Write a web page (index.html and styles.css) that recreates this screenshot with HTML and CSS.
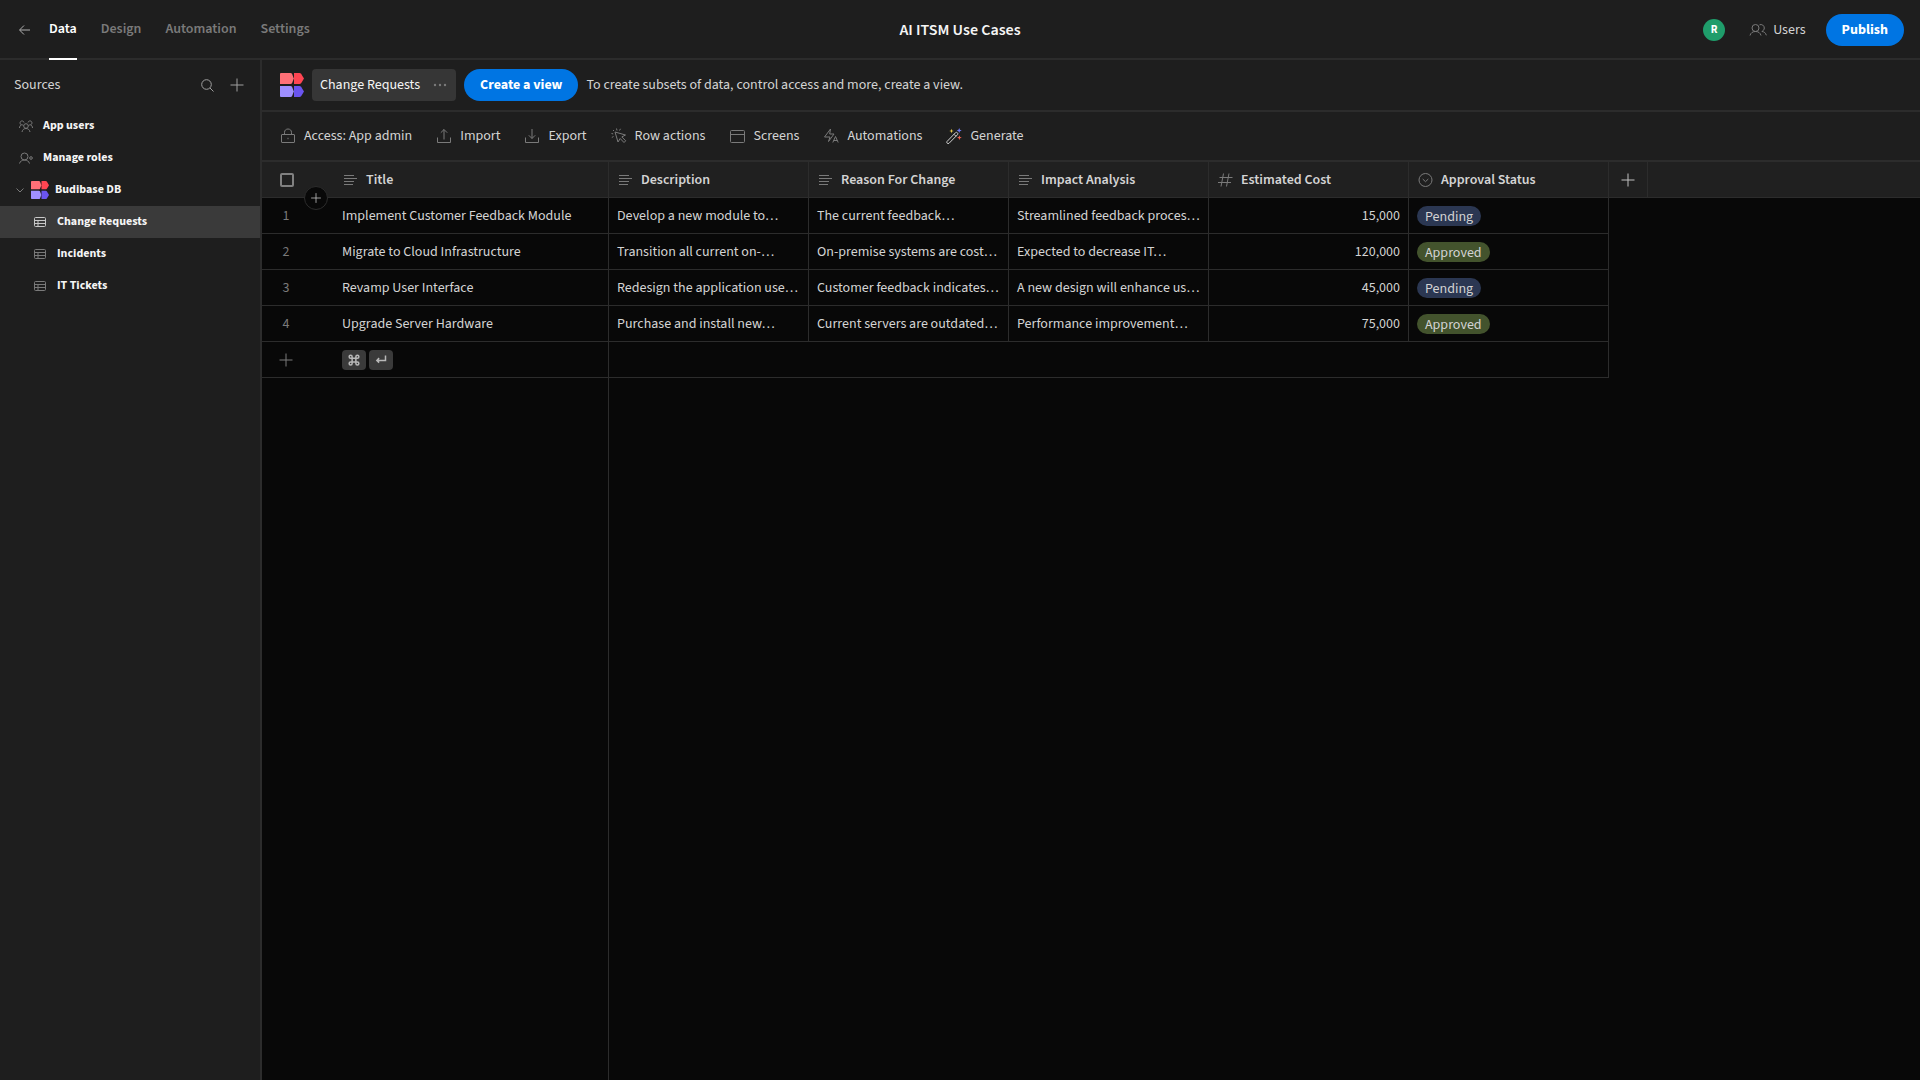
FILE: index.html
```
<!DOCTYPE html>
<html lang="en">
<head>
    <meta charset="UTF-8">
    <meta name="viewport" content="width=device-width, initial-scale=1.0">
    <title>AI ITSM Use Cases</title>
    <link rel="stylesheet" href="styles.css">
</head>
<body>
    <!-- shared icons -->
    <svg class="sprite" aria-hidden="true">
        <symbol id="logo" viewBox="0 0 24 24">
            <path fill="#ff7077" d="M0 1q0-1 1-1h9.500q1 0 1.500.800L13.800 5.500 12 10.200q-.5.800-1.500.8H0z"/>
            <path fill="#ff4552" d="M14 0h5.500q1 0 1.600.800L24 5.500 21.100 10.200q-.6.800-1.600.8H14z"/>
            <path fill="#9f8fff" d="M0 13h10.500q1 0 1.500.800L13.800 18.500 12 23.200q-.5.800-1.500.8H1q-1 0-1-1z"/>
            <path fill="#6a54f0" d="M14 13h5.500q1 0 1.600.800L24 18.500 21.100 23.200q-.6.800-1.600.8H14z"/>
        </symbol>
        <symbol id="plus" viewBox="0 0 16 16">
            <path d="M8 1.500v13M1.500 8h13"/>
        </symbol>
        <symbol id="text-lines" viewBox="0 0 16 16">
            <path d="M2 3.500h10M2 6.500h13M2 9.500h10M2 12.500h9"/>
        </symbol>
        <symbol id="table-icon" viewBox="0 0 16 16">
            <rect x="2.500" y="3.500" width="11" height="9" rx="1"/>
            <path d="M2.500 6.500h11M2.500 9.500h11M6 6.500v6"/>
        </symbol>
    </svg>

    <header class="topbar">
        <nav class="tabs">
            <a class="back" href="#" aria-label="Back">
                <svg class="icon" viewBox="0 0 16 16"><path d="M14 8H4M8 3.500 3.500 8 8 12.500"/></svg>
            </a>
            <a class="tab active" href="#">Data</a>
            <a class="tab" href="#">Design</a>
            <a class="tab" href="#">Automation</a>
            <a class="tab" href="#">Settings</a>
        </nav>
        <h1>AI ITSM Use Cases</h1>
        <div class="top-actions">
            <span class="avatar">R</span>
            <button class="users" type="button">
                <svg class="icon-wide" viewBox="0 0 18 16"><circle cx="6.500" cy="6" r="3.500"/><path d="M1 13.500c.6-2.600 2.700-4 5.500-4s4.900 1.400 5.500 4M10.500 2.800c2.200-.9 4.800.6 4.800 3.200 0 1.600-1 3-2.600 3.400M13 9.500c2.200.2 3.800 1.500 4.300 3.800"/></svg>
                Users
            </button>
            <button class="cta" type="button">Publish</button>
        </div>
    </header>

    <div class="layout">
        <aside class="sidebar">
            <div class="sources">
                <h2>Sources</h2>
                <button type="button" aria-label="Search"><svg class="icon" viewBox="0 0 16 16"><circle cx="7.500" cy="7.500" r="4.800"/><path d="m11 11 3.500 3.500"/></svg></button>
                <button type="button" aria-label="Add source"><svg class="icon"><use href="#plus"/></svg></button>
            </div>
            <a class="source" href="#">
                <svg class="icon" viewBox="0 0 16 16"><circle cx="8" cy="8" r="2.300"/><path d="M4 14c.4-2.200 1.900-3.500 4-3.500s3.600 1.300 4 3.500M6 4.500A2 2 0 1 0 3.400 6.800M1.500 10c.1-1.600.8-2.700 1.900-3.200 1.100 0 1.700.3 2.100.8M10 4.500a2 2 0 1 1 2.600 2.300M14.500 10c-.1-1.600-.8-2.700-1.900-3.200-1.100 0-1.700.3-2.100.8"/></svg>
                App users
            </a>
            <a class="source" href="#">
                <svg class="icon" viewBox="0 0 16 16"><circle cx="6.500" cy="6.500" r="3.500"/><path d="M1.500 13.500c.7-2.300 2.500-3.500 5-3.500s4.300 1.200 5 3.500"/><circle cx="13" cy="8" r="1.300"/></svg>
                Manage roles
            </a>
            <a class="source db" href="#">
                <svg class="chevron" viewBox="0 0 10 10"><path d="M1.500 3.500 5 7l3.500-3.500"/></svg>
                <svg class="db-logo"><use href="#logo"/></svg>
                Budibase DB
            </a>
            <a class="source child selected" href="#"><svg class="icon"><use href="#table-icon"/></svg>Change Requests</a>
            <a class="source child" href="#"><svg class="icon"><use href="#table-icon"/></svg>Incidents</a>
            <a class="source child" href="#"><svg class="icon"><use href="#table-icon"/></svg>IT Tickets</a>
        </aside>

        <main class="content">
            <div class="viewbar">
                <svg class="logo"><use href="#logo"/></svg>
                <button class="view-tab" type="button">
                    Change Requests
                    <svg class="icon dots" viewBox="0 0 16 16"><circle cx="3" cy="8" r="1.200"/><circle cx="8" cy="8" r="1.200"/><circle cx="13" cy="8" r="1.200"/></svg>
                </button>
                <button class="cta" type="button">Create a view</button>
                <p>To create subsets of data, control access and more, create a view.</p>
            </div>

            <div class="toolbar">
                <button type="button"><svg class="icon" viewBox="0 0 16 16"><rect x="1.500" y="6.500" width="13" height="8" rx=".5"/><path d="M4.500 6.500V4.300c0-2 1.500-3.300 3.500-3.300s3.500 1.300 3.500 3.300v2.200M8 9.800v1.400"/></svg>Access: App admin</button>
                <button type="button"><svg class="icon" viewBox="0 0 16 16"><path d="M1.500 9.500v5h13v-5M8 11.500v-10M4.800 4.700 8 1.500l3.200 3.200"/></svg>Import</button>
                <button type="button"><svg class="icon" viewBox="0 0 16 16"><path d="M1.500 9.500v5h13v-5M8 1v9.500M4.800 7.300 8 10.500l3.200-3.200"/></svg>Export</button>
                <button type="button"><svg class="icon" viewBox="0 0 16 16"><path d="m4 4 3 10 2.200-3.500 3.800 4 1.700-1.700-3.900-3.900L14.500 7zM5.500.5l.5 2M9.500.8l-1 1.700M2 2l1 1M.5 5.500l1.700.4M.8 9.500l1.700-1"/></svg>Row actions</button>
                <button type="button"><svg class="icon" viewBox="0 0 16 16"><rect x="1.500" y="2.500" width="14" height="12" rx="1"/><path d="M1.500 6.500h14"/></svg>Screens</button>
                <button type="button"><svg class="icon" viewBox="0 0 16 16"><path d="M7 9H1.500L7.500 1l-.8 5H11L5.500 13.500 7 9M9.800 14.500l2.700-6 2.700 6M10.700 12.500h3.600"/></svg>Automations</button>
                <button type="button"><svg class="icon wand" viewBox="0 0 16 16"><path class="stick" d="m1 13.500 8.500-8.800q1-.8 1.900.1.900.9.100 1.900L3 15.300Q2 16 1.200 15.200T1 13.500zM8 6.300l2 2"/><path fill="#e8c84a" d="m5.500.800.6 1.600 1.600.6-1.600.6-.6 1.600-.6-1.600L3.300 3l1.600-.6z"/><path fill="#6f7bf7" d="m13.200 0 .7 1.800 1.800.7-1.800.7-.7 1.800-.7-1.800-1.800-.7 1.800-.7z"/><path fill="#f0604d" d="m13.400 7.200.7 1.700 1.700.7-1.700.7-.7 1.700-.7-1.700-1.700-.7 1.700-.7z"/></svg>Generate</button>
            </div>

            <div class="grid">
                <button class="add-between" type="button" aria-label="Insert row"><svg class="icon-small"><use href="#plus"/></svg></button>
                <table>
                    <colgroup>
                        <col class="col-gutter">
                        <col class="col-title">
                        <col class="col-field" span="5">
                        <col class="col-add">
                        <col>
                    </colgroup>
                    <thead>
                        <tr>
                            <th class="gutter"><input type="checkbox" aria-label="Select all rows"></th>
                            <th><span class="field"><svg class="icon"><use href="#text-lines"/></svg>Title</span></th>
                            <th><span class="field"><svg class="icon"><use href="#text-lines"/></svg>Description</span></th>
                            <th><span class="field"><svg class="icon"><use href="#text-lines"/></svg>Reason For Change</span></th>
                            <th><span class="field"><svg class="icon"><use href="#text-lines"/></svg>Impact Analysis</span></th>
                            <th><span class="field"><svg class="icon" viewBox="0 0 16 16"><path d="M6.500 1.500 4 14.500M12 1.500 9.500 14.500M2.500 5.500h13M1 10.500h13"/></svg>Estimated Cost</span></th>
                            <th><span class="field"><svg class="icon" viewBox="0 0 16 16"><circle cx="8.500" cy="8" r="6.500"/><path d="m5.700 7 2.800 2.700L11.300 7"/></svg>Approval Status</span></th>
                            <th class="add-column"><button type="button" aria-label="Add column"><svg class="icon"><use href="#plus"/></svg></button></th>
                            <th class="filler"></th>
                        </tr>
                    </thead>
                    <tbody>
                        <tr>
                            <td class="gutter">1</td>
                            <td>Implement Customer Feedback Module</td>
                            <td>Develop a new module to…</td>
                            <td>The current feedback…</td>
                            <td>Streamlined feedback proces…</td>
                            <td class="number">15,000</td>
                            <td><span class="pill pending">Pending</span></td>
                        </tr>
                        <tr>
                            <td class="gutter">2</td>
                            <td>Migrate to Cloud Infrastructure</td>
                            <td>Transition all current on-…</td>
                            <td>On-premise systems are cost…</td>
                            <td>Expected to decrease IT…</td>
                            <td class="number">120,000</td>
                            <td><span class="pill approved">Approved</span></td>
                        </tr>
                        <tr>
                            <td class="gutter">3</td>
                            <td>Revamp User Interface</td>
                            <td>Redesign the application use…</td>
                            <td>Customer feedback indicates…</td>
                            <td>A new design will enhance us…</td>
                            <td class="number">45,000</td>
                            <td><span class="pill pending">Pending</span></td>
                        </tr>
                        <tr>
                            <td class="gutter">4</td>
                            <td>Upgrade Server Hardware</td>
                            <td>Purchase and install new…</td>
                            <td>Current servers are outdated…</td>
                            <td>Performance improvement…</td>
                            <td class="number">75,000</td>
                            <td><span class="pill approved">Approved</span></td>
                        </tr>
                        <tr>
                            <td class="gutter"><button type="button" aria-label="Add row"><svg class="icon"><use href="#plus"/></svg></button></td>
                            <td>
                                <span class="keys">
                                    <kbd><svg class="icon-small" viewBox="0 0 16 16"><path d="M5.500 5.500h5v5h-5zM5.500 5.500h-2a2 2 0 1 1 2-2zM10.500 5.500h2a2 2 0 1 0-2-2zM5.500 10.500h-2a2 2 0 1 0 2 2zM10.500 10.500h2a2 2 0 1 1-2 2z"/></svg></kbd>
                                    <kbd><svg class="icon-small" viewBox="0 0 16 16"><path d="M14 2v6.500H2.500M5.500 5.500l-3 3 3 3"/></svg></kbd>
                                </span>
                            </td>
                            <td colspan="5"></td>
                        </tr>
                    </tbody>
                </table>
                <div class="frozen-edge"></div>
            </div>
        </main>
    </div>
</body>
</html>
```
FILE: styles.css
```
:root {
    --panel: #1e1e1e;
    --canvas: #080808;
    --border: #2c2c2c;
    --selected: #3a3a3a;
    --text: #d4d4d4;
    --bright: #f5f5f5;
    --muted: #7a7a7a;
    --blue: #0075e3;
}

* {
    box-sizing: border-box;
}

body {
    margin: 0;
    min-height: 100vh;
    display: flex;
    flex-direction: column;
    background: var(--canvas);
    color: var(--text);
    font-family: "Source Sans 3", "Source Sans Pro", "Noto Sans CJK SC", sans-serif;
    font-size: 14px;
    line-height: 20px;
}

a {
    color: inherit;
    text-decoration: none;
}

button {
    padding: 0;
    border: none;
    background: none;
    color: inherit;
    font: inherit;
    cursor: pointer;
}

h1, h2, p {
    margin: 0;
}

svg {
    display: block;
    flex: none;
    fill: none;
    stroke: var(--muted);
}

.sprite {
    position: absolute;
    width: 0;
    height: 0;
}

.icon {
    width: 16px;
    height: 16px;
}

.icon-wide {
    width: 18px;
    height: 16px;
}

.icon-small {
    width: 12px;
    height: 12px;
}

/* top bar */
.topbar {
    display: grid;
    grid-template-columns: 1fr auto 1fr;
    align-items: center;
    height: 60px;
    padding: 0 16px;
    background: var(--panel);
    border-bottom: 2px solid var(--border);
}

.topbar h1 {
    color: var(--bright);
    font-size: 16px;
    font-weight: 600;
}

.tabs {
    display: flex;
    align-items: center;
    gap: 24px;
    height: 60px;
}

.back {
    margin-right: -7px;
}

.back svg {
    stroke: #b0b0b0;
}

.tab {
    height: 60px;
    line-height: 58px;
    color: var(--muted);
    font-weight: 600;
    border-bottom: 2px solid transparent;
}

.tab.active {
    color: #fff;
    border-color: #fff;
}

.top-actions {
    display: flex;
    align-items: center;
    justify-content: flex-end;
}

.avatar {
    width: 22px;
    height: 22px;
    border-radius: 50%;
    background: #1f9d6b;
    color: #fff;
    font-size: 11px;
    font-weight: 700;
    line-height: 22px;
    text-align: center;
}

.users {
    display: flex;
    align-items: center;
    gap: 6px;
    margin: 0 20px 0 24px;
}

.cta {
    height: 32px;
    padding: 0 16px;
    border-radius: 16px;
    background: var(--blue);
    color: #fff;
    font-weight: 700;
    line-height: 32px;
}

/* sidebar */
.layout {
    flex: 1;
    display: flex;
}

.sidebar {
    width: 262px;
    flex: none;
    background: var(--panel);
    border-right: 2px solid var(--border);
}

.sources {
    display: flex;
    align-items: center;
    gap: 14px;
    height: 50px;
    padding: 0 15px 0 14px;
}

.sources h2 {
    flex: 1;
    font-size: 14px;
    font-weight: 400;
}

.sources svg {
    stroke: #a0a0a0;
}

.source {
    display: flex;
    align-items: center;
    gap: 9px;
    height: 32px;
    padding-left: 18px;
    color: var(--bright);
    font-size: 12px;
    font-weight: 700;
}

.source.db {
    gap: 6px;
    padding-left: 15px;
}

.source.child {
    padding-left: 32px;
}

.source.selected {
    background: var(--selected);
}

.source.selected svg {
    stroke: #c8c8c8;
}

.chevron {
    width: 10px;
    height: 10px;
}

.db-logo {
    width: 18px;
    height: 18px;
}

.db-logo,
.logo {
    stroke: none;
}

/* view bar and toolbar */
.content {
    flex: 1;
    min-width: 0;
    display: flex;
    flex-direction: column;
}

.viewbar {
    display: flex;
    align-items: center;
    gap: 8px;
    height: 52px;
    padding: 0 18px;
    background: var(--panel);
    border-bottom: 2px solid var(--border);
}

.logo {
    width: 24px;
    height: 24px;
}

.view-tab {
    display: flex;
    align-items: center;
    gap: 12px;
    height: 32px;
    padding: 0 8px;
    border-radius: 4px;
    background: #363636;
    color: var(--bright);
}

.dots {
    fill: var(--muted);
    stroke: none;
}

.toolbar {
    display: flex;
    align-items: center;
    gap: 24px;
    height: 50px;
    padding: 0 18px;
    background: var(--panel);
    border-bottom: 2px solid var(--border);
}

.toolbar button {
    display: flex;
    align-items: center;
    gap: 8px;
}

.wand {
    stroke: none;
}

.wand .stick {
    stroke: #d0d0d0;
}

/* data grid */
.grid {
    flex: 1;
    position: relative;
    display: flex;
    flex-direction: column;
}

table {
    width: 100%;
    table-layout: fixed;
    border-collapse: separate;
    border-spacing: 0;
}

.col-gutter {
    width: 72px;
}

.col-title {
    width: 275px;
}

.col-field {
    width: 200px;
}

.col-add {
    width: 39px;
}

th,
td {
    height: 36px;
    padding: 0 8px;
    border-right: 1px solid var(--border);
    border-bottom: 1px solid var(--border);
    overflow: hidden;
    white-space: nowrap;
    text-align: left;
}

th {
    background: #202020;
    font-weight: 600;
}

.field {
    display: flex;
    align-items: center;
    gap: 8px;
}

th.gutter,
td.gutter,
.filler {
    border-right: none;
}

th.gutter {
    padding-left: 18px;
}

td.gutter {
    padding: 0 24px 0 0;
    color: var(--muted);
    text-align: center;
}

td.gutter button,
.add-column button {
    display: block;
    margin: 0 auto;
}

td.number {
    text-align: right;
}

.add-column svg {
    stroke: #c0c0c0;
}

input[type="checkbox"] {
    appearance: none;
    display: block;
    width: 14px;
    height: 14px;
    margin: 0;
    border: 2px solid #808080;
    border-radius: 2px;
}

.pill {
    display: inline-block;
    height: 20px;
    padding: 0 8px;
    border-radius: 10px;
    line-height: 22px;
    vertical-align: middle;
}

.pending {
    background: #2b3752;
}

.approved {
    background: #43532d;
}

.keys {
    display: flex;
    gap: 3px;
}

kbd {
    display: flex;
    align-items: center;
    justify-content: center;
    width: 24px;
    height: 20px;
    border-radius: 4px;
    background: var(--selected);
}

kbd svg {
    stroke: #b8b8b8;
    stroke-width: 2;
}

/* sits on the line between the header and the first row */
.add-between {
    position: absolute;
    top: 24px;
    left: 42px;
    display: flex;
    align-items: center;
    justify-content: center;
    width: 24px;
    height: 24px;
    border: 1px solid var(--border);
    border-radius: 50%;
    background: var(--canvas);
}

.add-between svg {
    stroke: #c8c8c8;
}

.frozen-edge {
    flex: 1;
    width: 347px;
    border-right: 1px solid var(--border);
}
```
